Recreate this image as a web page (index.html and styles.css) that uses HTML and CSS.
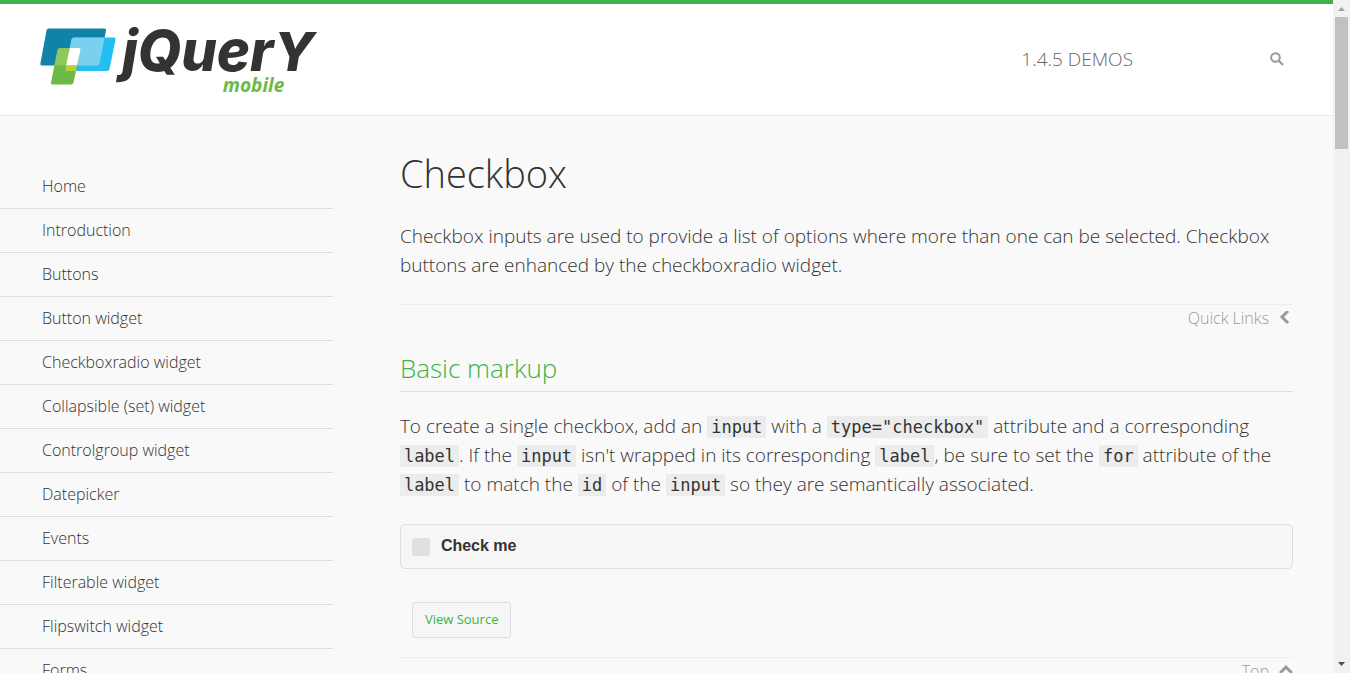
FILE: index.html
```html
<!DOCTYPE html>
<html lang="en">
<head>
<meta charset="utf-8">
<title>Checkbox - jQuery Mobile Demos</title>
<link rel="stylesheet" href="styles.css">
</head>
<body>
<div class="window">
  <div class="page">
    <header class="header">
      <a class="logo" href="#" aria-label="jQuery Mobile Demos home">
        <svg class="logo-mark" width="76" height="60" viewBox="0 0 76 60" aria-hidden="true">
          <path fill="#0f83a8" d="M9 1.500H64.500Q66.500 1.500 66 3.500L59.500 36.500Q59 38.500 57 38.500H2Q0 38.500 .4 36.500L6.500 3.500Q7 1.500 9 1.500Z"/>
          <path fill="#24bff2" d="M34 10.500H74Q76 10.500 75.600 12.500L69.500 42Q69 44 67 44H27Q25 44 25.400 42L31.500 12.500Q32 10.500 34 10.500Z"/>
          <path fill="#79d0ef" d="M34 10.500H64.600L59.500 36.500Q59 38.500 57 38.500H26L31.500 12.500Q32 10.500 34 10.500Z"/>
          <path fill="#6cba45" d="M20 21H39Q41 21 40.500 23L33.500 55.500Q33 57.500 31 57.500H13Q10.500 57.500 11 55.500L17.500 23Q18 21 20 21Z"/>
          <path fill="#8cc85c" d="M20 21H29.800L26 38.500H14.400L17.500 23Q18 21 20 21Z"/>
          <path fill="#fff" d="M29.800 21H39Q41 21 40.500 23L37 38.500H26Z"/>
          <path fill="#b7d133" d="M26 38.500H37L35.900 44H27Q25 44 25.400 42Z"/>
        </svg>
        <span class="logo-text">
          <span class="logo-name">jQuer<span class="logo-tall">y</span></span>
          <span class="logo-sub">mobile</span>
        </span>
      </a>
      <h2 class="version">1.4.5 DEMOS</h2>
      <button class="search" type="button" aria-label="Search">
        <svg width="14" height="14" viewBox="0 0 14 14" aria-hidden="true"><circle cx="5.500" cy="5.500" r="4.300"/><path d="M8.800 8.800L13 13"/></svg>
      </button>
    </header>
    <div class="columns">
      <nav class="sidebar" aria-label="Demos">
        <ul class="menu">
          <li><a href="#">Home</a></li>
          <li><a href="#">Introduction</a></li>
          <li><a href="#">Buttons</a></li>
          <li><a href="#">Button widget</a></li>
          <li><a href="#">Checkboxradio widget</a></li>
          <li><a href="#">Collapsible (set) widget</a></li>
          <li><a href="#">Controlgroup widget</a></li>
          <li><a href="#">Datepicker</a></li>
          <li><a href="#">Events</a></li>
          <li><a href="#">Filterable widget</a></li>
          <li><a href="#">Flipswitch widget</a></li>
          <li><a href="#">Forms</a></li>
        </ul>
      </nav>
      <main class="content">
        <h1 class="title">Checkbox</h1>
        <p class="text">Checkbox inputs are used to provide a list of options where more than one can be selected. Checkbox buttons are enhanced by the checkboxradio widget.</p>
        <div class="jump">
          <a href="#">Quick Links <svg width="14" height="14" viewBox="0 0 14 14" aria-hidden="true"><path d="M9 0L3 6L9 12"/></svg></a>
        </div>
        <h2 class="section">Basic markup</h2>
        <p class="text">To create a single checkbox, add an <code>input</code> with a <code>type="checkbox"</code> attribute and a corresponding <code>label</code>. If the <code>input</code> isn't wrapped in its corresponding <code>label</code>, be sure to set the <code>for</code> attribute of the <code>label</code> to match the <code>id</code> of the <code>input</code> so they are semantically associated.</p>
        <label class="check" for="check-me"><input id="check-me" type="checkbox"><span>Check me</span></label>
        <button class="source" type="button">View Source</button>
        <div class="jump">
          <a href="#">Top <svg width="14" height="14" viewBox="0 0 14 14" aria-hidden="true"><path d="M1 9L7 3L13 9"/></svg></a>
        </div>
      </main>
    </div>
  </div>
  <div class="scrollbar" aria-hidden="true">
    <svg width="17" height="17" viewBox="0 0 17 17"><path fill="#a3a3a3" d="M5 11H12L8.500 7Z"/></svg>
    <div class="track"><div class="thumb"></div></div>
    <svg width="17" height="17" viewBox="0 0 17 17"><path fill="#505050" d="M5 6H12L8.500 10Z"/></svg>
  </div>
</div>
</body>
</html>
```
FILE: styles.css
```css
* { box-sizing: border-box; }
body {
  margin: 0;
  background: #f9f9f9;
  color: #333;
  font-family: "Open Sans", sans-serif;
  font-weight: 300;
}
a { color: inherit; text-decoration: none; }
button { font: inherit; cursor: pointer; }

.window { display: flex; height: 100vh; overflow: hidden; }
.page { flex: 1; min-width: 0; }

.header {
  display: flex;
  align-items: center;
  height: 116px;
  padding: 0 40px 2px;
  border-top: 4px solid #3eb249;
  border-bottom: 1px solid #e8e8e8;
  background: #fff;
}
.logo { display: flex; align-items: flex-start; height: 64px; }
.logo-mark { flex: none; }
.logo-text { display: flex; flex-direction: column; padding-left: 6px; }
.logo-name {
  color: #333331;
  font-family: Inter, sans-serif;
  font-size: 56px;
  font-style: italic;
  font-weight: 800;
  line-height: 48px;
}
.logo-tall { font-size: 54px; text-transform: uppercase; }
.logo-sub {
  align-self: flex-end;
  padding-right: 30px;
  color: #6cba45;
  font-size: 19px;
  font-style: italic;
  font-weight: 700;
  line-height: 18px;
}
.version {
  margin: 0 137px 0 auto;
  color: #666;
  font-size: 19px;
  font-weight: 300;
  line-height: 26px;
}
.search {
  display: flex;
  margin-right: 9px;
  padding: 0;
  border: 0;
  background: none;
}
.search svg { fill: none; stroke: #999; stroke-width: 2; }

.columns { display: flex; align-items: flex-start; }
.sidebar { width: 25%; padding-top: 49px; }
.menu { margin: 0; padding: 0; list-style: none; }
.menu a {
  display: block;
  padding: 10px 42px 11px;
  border-bottom: 1px solid #ddd;
  font-size: 16px;
  line-height: 22px;
}

.content { flex: 1; min-width: 0; margin-left: 5%; padding: 29px 40px 0 0; }
.title { margin: 0 0 21px; font-size: 38px; font-weight: 300; line-height: 56px; }
.text { margin: 0; font-size: 19px; line-height: 29px; }
.text code {
  padding: 1px 4px;
  background: #ececec;
  font-family: "DejaVu Sans Mono", monospace;
  font-size: 17px;
  line-height: 20px;
}
.jump {
  display: flex;
  justify-content: flex-end;
  margin-top: 24px;
  border-top: 1px solid #eee;
  color: #999;
  font-size: 16px;
  line-height: 26px;
}
.jump a { display: flex; align-items: center; gap: 10px; }
.jump svg { fill: none; stroke: #999; stroke-width: 3; }
.section {
  margin: 19px 0 20px;
  padding-bottom: 5px;
  border-bottom: 1px solid #ddd;
  color: #3eb249;
  font-size: 26px;
  font-weight: 300;
  line-height: 36px;
}
.check {
  display: flex;
  align-items: center;
  gap: 11px;
  margin-top: 25px;
  padding: 10px 11px 12px;
  border: 1px solid #ddd;
  border-radius: 5px;
  background: #f6f6f6;
  font: bold 16px/21px "Liberation Sans", Arial, sans-serif;
}
.check input {
  appearance: none;
  width: 18px;
  height: 18px;
  margin: 3px 0 0;
  border-radius: 3px;
  background: #e0e0e0;
}
.source {
  display: block;
  margin: 33px 0 0 12px;
  padding: 7px 12px 9px;
  border: 1px solid #ddd;
  border-radius: 3px;
  background: #f6f6f6;
  color: #3eb249;
  font-size: 13px;
  font-weight: 400;
  line-height: 18px;
}
.source + .jump { margin-top: 19px; }

.scrollbar { display: flex; flex-direction: column; flex: none; width: 17px; background: #f1f1f1; }
.track { flex: 1; padding: 0 2px; }
.thumb { height: 132px; background: #c1c1c1; }
```
